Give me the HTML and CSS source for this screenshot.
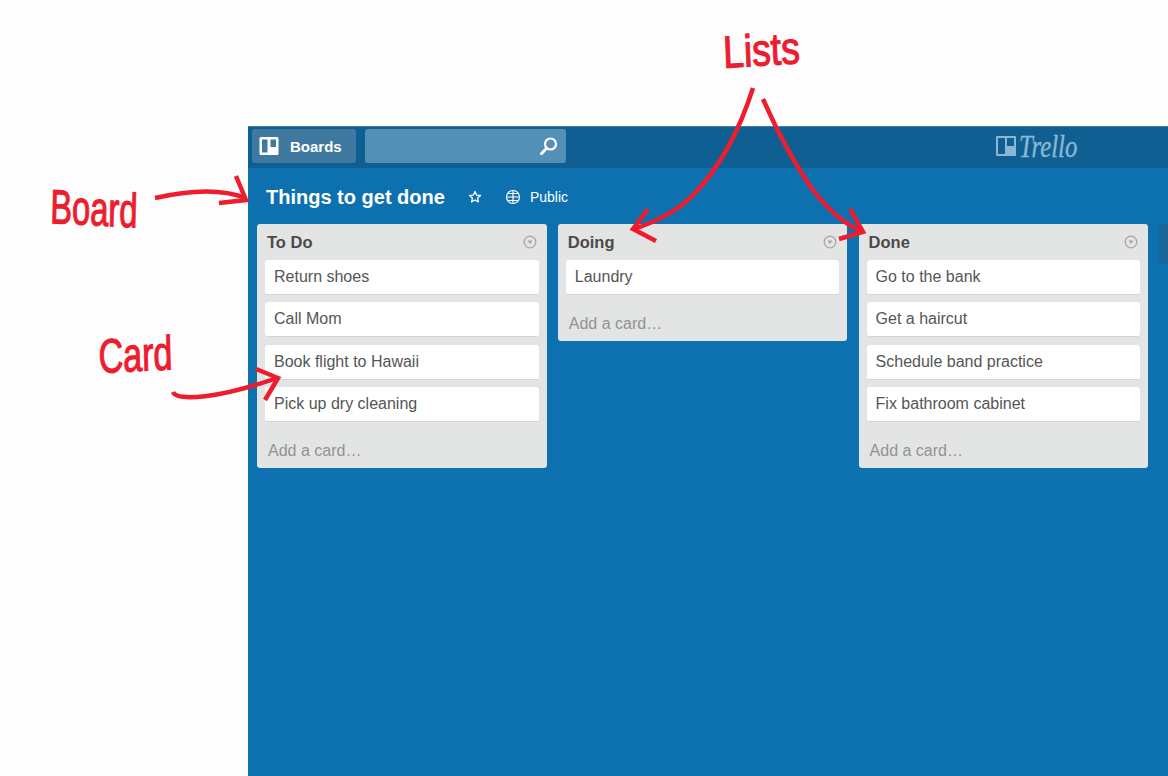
FILE: index.html
```html
<!DOCTYPE html>
<html lang="en">
<head>
  <meta charset="UTF-8">
  <meta name="viewport" content="width=device-width, initial-scale=1.0">
  <title>Trello board</title>
  <link rel="stylesheet" href="styles.css">
</head>
<body>
  <main class="board">
    <header class="header">
      <a class="boards-btn" href="#">
        <svg class="boards-icon" viewBox="0 0 20 20"><path fill-rule="evenodd" d="M2 1h16a1.500 1.500 0 0 1 1.500 1.500v15A1.500 1.500 0 0 1 18 19H2a1.500 1.500 0 0 1-1.500-1.500v-15A1.500 1.500 0 0 1 2 1zM3 3.500v13h5.500v-13zM11.500 3.500v7.500H17V3.500z" fill="#fff"/></svg>
        Boards
      </a>
      <div class="search">
        <svg class="search-icon" viewBox="0 0 20 20"><circle cx="11.500" cy="8" r="5.500" fill="none" stroke="#fff" stroke-width="2.200"/><path d="M7.500 12.500L2.500 17.500" stroke="#fff" stroke-width="3" stroke-linecap="round"/></svg>
      </div>
      <div class="logo">
        <svg class="logo-icon" viewBox="0 0 20 20"><path fill-rule="evenodd" d="M1 0h18a1 1 0 0 1 1 1v18a1 1 0 0 1-1 1H1a1 1 0 0 1-1-1V1a1 1 0 0 1 1-1zM2 2v16h7V2zM11 2v8h7V2z" fill="#8ab8d3"/></svg>
        <span class="logo-text">Trello</span>
      </div>
    </header>

    <div class="title-row">
      <h1 class="board-title">Things to get done</h1>
      <svg class="star-icon" viewBox="0 0 14 14"><path d="M7 1.500l1.600 3.600 3.900.4-2.900 2.600.8 3.800L7 10l-3.400 1.900.8-3.800L1.500 5.500l3.900-.4z" fill="none" stroke="#fff" stroke-width="1.300" stroke-linejoin="round"/></svg>
      <svg class="globe-icon" viewBox="0 0 16 16"><g fill="none" stroke="#fff" stroke-width="1.200"><circle cx="8" cy="8" r="6.500"/><path d="M8 1.500v13M1.500 8h13M3 4.500h10M3 11.500h10"/></g></svg>
      <span class="visibility">Public</span>
    </div>

    <div class="lists">
      <section class="list">
        <div class="list-head">
          <h2>To Do</h2>
          <svg class="menu-icon" viewBox="0 0 14 14"><circle cx="7" cy="7" r="5.800" fill="none" stroke="#a6a6a6" stroke-width="1.300"/><path d="M4.500 5.500h5L7 9z" fill="#a6a6a6"/></svg>
        </div>
        <div class="card">Return shoes</div>
        <div class="card">Call Mom</div>
        <div class="card">Book flight to Hawaii</div>
        <div class="card">Pick up dry cleaning</div>
        <a class="add-card" href="#">Add a card…</a>
      </section>

      <section class="list">
        <div class="list-head">
          <h2>Doing</h2>
          <svg class="menu-icon" viewBox="0 0 14 14"><circle cx="7" cy="7" r="5.800" fill="none" stroke="#a6a6a6" stroke-width="1.300"/><path d="M4.500 5.500h5L7 9z" fill="#a6a6a6"/></svg>
        </div>
        <div class="card">Laundry</div>
        <a class="add-card" href="#">Add a card…</a>
      </section>

      <section class="list">
        <div class="list-head">
          <h2>Done</h2>
          <svg class="menu-icon" viewBox="0 0 14 14"><circle cx="7" cy="7" r="5.800" fill="none" stroke="#a6a6a6" stroke-width="1.300"/><path d="M4.500 5.500h5L7 9z" fill="#a6a6a6"/></svg>
        </div>
        <div class="card">Go to the bank</div>
        <div class="card">Get a haircut</div>
        <div class="card">Schedule band practice</div>
        <div class="card">Fix bathroom cabinet</div>
        <a class="add-card" href="#">Add a card…</a>
      </section>

      <div class="next-list"></div>
    </div>
  </main>

  <!-- Red notes drawn over the screenshot -->
  <span class="note note-board">Board</span>
  <span class="note note-card">Card</span>
  <span class="note note-lists">Lists</span>
  <svg class="arrows" viewBox="0 0 1168 776">
    <g fill="none" stroke="#ed1c2e" stroke-width="4.500" stroke-linecap="butt" stroke-linejoin="miter">
      <path d="M155 198C185 191 220 188 246 198"/>
      <path d="M236 176L246 200L219 203"/>
      <path d="M173 392C177 402 220 398 277 378"/>
      <path d="M256 369L278 378L265 400"/>
      <path d="M753 88C738 135 716 172 692 196C676 212 655 222 634 229"/>
      <path d="M648 209L633 229L656 241"/>
      <path d="M763 99C778 133 795 165 813 190C828 210 845 224 862 232"/>
      <path d="M850 209L863 232L839 239"/>
    </g>
  </svg>
</body>
</html>
```

FILE: styles.css
```css
html, body {
  height: 100%;
}
body {
  margin: 0;
  font-family: "Liberation Sans", Arial, sans-serif;
  background-color: #fdfdfd;
  color: #4d4d4d;
  overflow: hidden;
}
a {
  text-decoration: none;
}
.board {
  box-sizing: border-box;
  height: 650px;
  margin: 126px 0 0 248px;
  background-color: #0d71af;
}
.header {
  box-sizing: border-box;
  display: flex;
  align-items: center;
  height: 42px;
  padding: 1px 0 4px 4px;
  background-color: #105f92;
  border-top: 1px solid #3d80aa;
}
.boards-btn {
  display: flex;
  align-items: center;
  gap: 11px;
  width: 104px;
  height: 34px;
  box-sizing: border-box;
  padding-left: 7px;
  border-radius: 3px;
  background-color: #40799f;
  color: #fff;
  font-size: 15px;
  font-weight: bold;
}
.boards-icon {
  width: 20px;
  height: 20px;
}
.search {
  display: flex;
  align-items: center;
  justify-content: flex-end;
  width: 201px;
  height: 34px;
  margin-left: 9px;
  padding-right: 7px;
  box-sizing: border-box;
  border-radius: 3px;
  background-color: #548fb5;
}
.search-icon {
  width: 20px;
  height: 20px;
}
.logo {
  display: flex;
  align-items: center;
  gap: 3px;
  margin-left: 430px;
}
.logo-icon {
  width: 20px;
  height: 20px;
}
.logo-text {
  font-family: "Liberation Serif", serif;
  font-style: italic;
  font-size: 31px;
  line-height: 1;
  color: #8ab8d3;
  -webkit-text-stroke: 0.400px #8ab8d3;
  transform: scaleX(0.800);
  transform-origin: left center;
}
.title-row {
  display: flex;
  align-items: center;
  height: 56px;
  padding: 2px 0 0 18px;
  box-sizing: border-box;
  color: #fff;
}
.board-title {
  margin: 0;
  font-size: 20px;
  font-weight: bold;
}
.star-icon {
  width: 14px;
  height: 14px;
  margin-left: 23px;
}
.globe-icon {
  width: 16px;
  height: 16px;
  margin-left: 23px;
}
.visibility {
  margin-left: 9px;
  font-size: 14px;
}
.lists {
  display: flex;
  align-items: flex-start;
  gap: 11.200px;
  padding-left: 9px;
}
.list {
  box-sizing: border-box;
  flex: 0 0 289.600px;
  padding: 0 8px;
  border-radius: 3px;
  background-color: #e3e4e4;
}
.list-head {
  display: flex;
  align-items: center;
  justify-content: space-between;
  height: 36px;
  padding: 0 2px;
}
.list-head h2 {
  margin: 0;
  padding-top: 1px;
  font-size: 16.500px;
  font-weight: bold;
  color: #4a4a4a;
}
.menu-icon {
  width: 14px;
  height: 14px;
}
.card {
  box-sizing: border-box;
  height: 35px;
  margin-bottom: 7.300px;
  padding: 0 9px;
  line-height: 33px;
  font-size: 16px;
  color: #555;
  border-radius: 3px;
  background-color: #fff;
  border-bottom: 1px solid #d4d6d6;
}
.add-card {
  display: block;
  height: 39px;
  padding: 13px 3px 0;
  box-sizing: border-box;
  font-size: 16px;
  color: #929292;
}
.next-list {
  flex: 0 0 10px;
  height: 40px;
  border-radius: 3px 0 0 3px;
  background-color: #1a6797;
}
.note {
  position: absolute;
  font-size: 48px;
  line-height: 1;
  color: #ed1c2e;
  -webkit-text-stroke: 1.200px #ed1c2e;
  white-space: nowrap;
  transform-origin: left top;
}
.note-board {
  left: 51px;
  top: 183px;
  transform: scaleX(0.680) rotate(2deg);
}
.note-card {
  left: 98px;
  top: 333px;
  font-size: 48px;
  transform: scaleX(0.710) rotate(-2deg);
}
.note-lists {
  left: 722px;
  top: 30px;
  font-size: 45px;
  transform: scaleX(0.830) rotate(-3deg);
}
.arrows {
  position: absolute;
  left: 0;
  top: 0;
  width: 1168px;
  height: 776px;
  pointer-events: none;
}
```
